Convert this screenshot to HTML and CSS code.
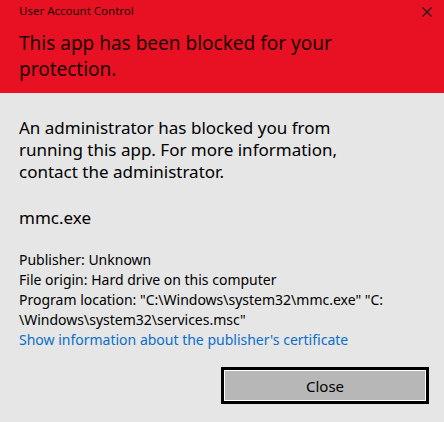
FILE: index.html
```html
<!DOCTYPE html>
<html lang="en">
<head>
  <title>User Account Control</title>
  <link rel="stylesheet" href="styles.css">
</head>
<body>

<div id="dialog">
  <div class="header">
    <div class="title-bar">
      <span class="title">User Account Control</span>
      <svg class="close-x" width="10" height="10" viewBox="0 0 10 10">
        <path d="M0.5 0.5 L9.5 9.5 M9.5 0.5 L0.5 9.5" stroke="#1a1a1a" stroke-width="1.1" fill="none"/>
      </svg>
    </div>
    <h1 class="headline">This app has been blocked for your<br>protection.</h1>
  </div>

  <div class="content">
    <p class="message">An administrator has blocked you from<br>running this app. For more information,<br>contact the administrator.</p>
    <p class="app-name">mmc.exe</p>
    <div class="details">
      <div>Publisher: Unknown</div>
      <div>File origin: Hard drive on this computer</div>
      <div>Program location: "C:\Windows\system32\mmc.exe" "C:<br>\Windows\system32\services.msc"</div>
      <a class="cert-link" href="#">Show information about the publisher's certificate</a>
    </div>
    <div class="buttons">
      <button class="close-btn" type="button">Close</button>
    </div>
  </div>
</div>

</body>
</html>
```

FILE: styles.css
```css
* {
  box-sizing: border-box;
}

html, body {
  margin: 0;
  padding: 0;
  height: 100%;
}

body {
  font-family: "Noto Sans", "Open Sans", sans-serif;
  background-color: #e6e6e6;
  color: #000;
}

#dialog {
  width: 444px;
  height: 422px;
  background-color: #e6e6e6;
}

.header {
  background-color: #e81123;
  padding: 3px 12px 11px 19px;
  color: #1b0305;
}

.title-bar {
  display: flex;
  justify-content: space-between;
  align-items: flex-start;
  height: 16px;
}

.title {
  font-size: 11.5px;
  line-height: 16px;
}

.close-x {
  display: block;
  margin-top: 4px;
}

.headline {
  margin: 11px 0 0;
  font-size: 19px;
  font-weight: normal;
  line-height: 26px;
}

.content {
  padding: 24px 15px 0 19px;
}

.message,
.app-name {
  margin: 0;
  font-size: 17px;
  line-height: 22px;
}

.app-name {
  margin-top: 24px;
}

.details {
  margin-top: 21px;
  font-size: 14px;
  line-height: 20px;
}

.cert-link {
  display: block;
  color: #0a6fc8;
  text-decoration: none;
}

.buttons {
  display: flex;
  justify-content: flex-end;
  margin-top: 17px;
}

.close-btn {
  width: 208px;
  height: 37px;
  padding: 0;
  background-color: #b7b7b7;
  border: 3px solid #000;
  box-shadow: inset 0 0 0 1px #fff;
  font-family: inherit;
  font-size: 15px;
  color: #000;
}
```
